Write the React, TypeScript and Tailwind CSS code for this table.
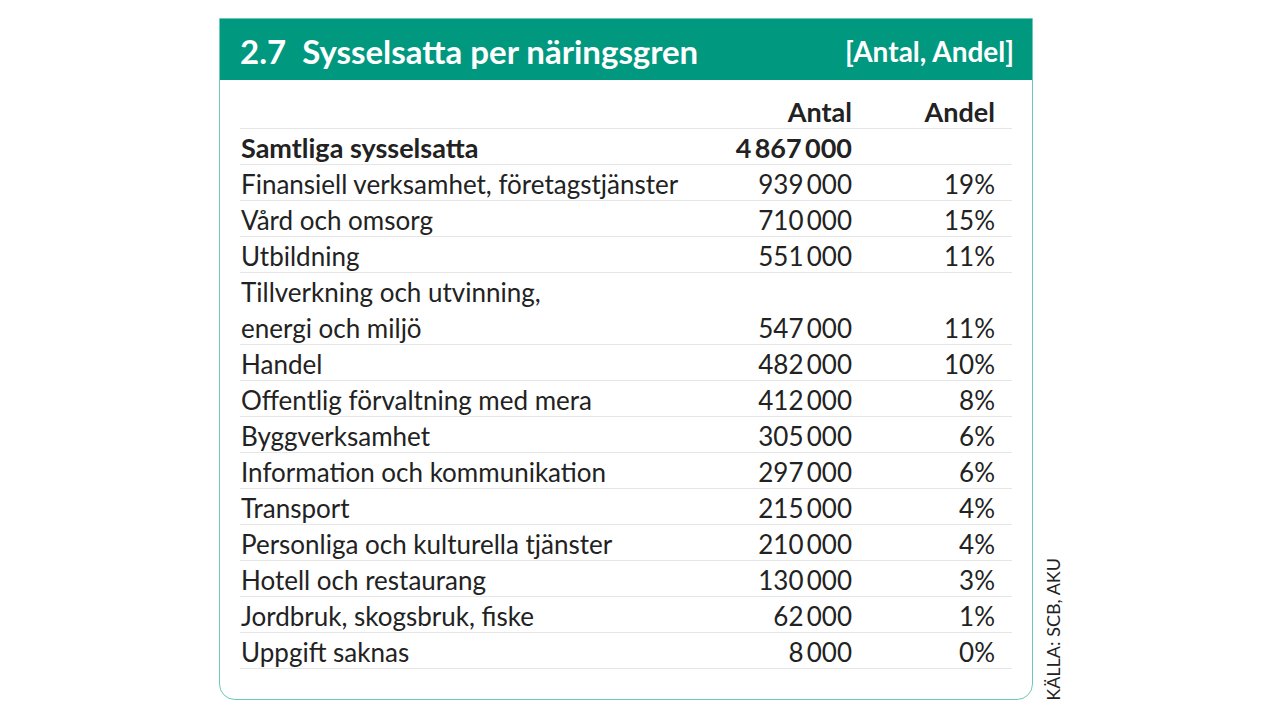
import React from "react";

const rows: { label: React.ReactNode; antal: string; andel: string; tall?: boolean; bold?: boolean }[] = [
  { label: "Samtliga sysselsatta", antal: "4 867 000", andel: "", bold: true },
  { label: "Finansiell verksamhet, företagstjänster", antal: "939 000", andel: "19%" },
  { label: "Vård och omsorg", antal: "710 000", andel: "15%" },
  { label: "Utbildning", antal: "551 000", andel: "11%" },
  {
    label: (
      <>
        Tillverkning och utvinning,
        <br />
        energi och miljö
      </>
    ),
    antal: "547 000",
    andel: "11%",
    tall: true,
  },
  { label: "Handel", antal: "482 000", andel: "10%" },
  { label: "Offentlig förvaltning med mera", antal: "412 000", andel: "8%" },
  { label: "Byggverksamhet", antal: "305 000", andel: "6%" },
  { label: "Information och kommunikation", antal: "297 000", andel: "6%" },
  { label: "Transport", antal: "215 000", andel: "4%" },
  { label: "Personliga och kulturella tjänster", antal: "210 000", andel: "4%" },
  { label: "Hotell och restaurang", antal: "130 000", andel: "3%" },
  { label: "Jordbruk, skogsbruk, fiske", antal: "62 000", andel: "1%" },
  { label: "Uppgift saknas", antal: "8 000", andel: "0%" },
];

function fmt(s: string) {
  return s.replace(/ /g, "\u2009");
}

export default function App() {
  return (
    <div
      className="w-[1280px] h-[720px] bg-white flex items-end pl-[219px] pt-[18px] pb-[20px] text-[#222]"
      style={{ fontFamily: "Lato, 'Noto Sans', sans-serif" }}
    >
      <div className="w-[814px] h-[682px] flex flex-col border border-[#6cc9b8] rounded-b-[16px] overflow-hidden">
        <div className="h-[62px] shrink-0 bg-[#00987f] flex items-center justify-between pl-[21px] pr-[19px] pt-[4px] text-white -mx-px -mt-px">
          <div className="text-[33px] font-bold leading-none">2.7&nbsp;&nbsp;Sysselsatta per näringsgren</div>
          <div className="text-[28px] font-bold leading-none">[Antal, Andel]</div>
        </div>
        <div className="pl-[20px] pr-[20px]">
          <div className="h-[49px] flex items-end border-b border-[#e6e6e6] text-[27px] font-bold leading-none pb-[3px]">
            <div className="flex-1" />
            <div className="w-[150px] text-right">Antal</div>
            <div className="w-[143px] text-right">Andel</div>
            <div className="w-[17px]" />
          </div>
          {rows.map((r, i) => (
            <div
              key={i}
              className={`flex items-end border-b border-[#e6e6e6] leading-[36px] ${r.tall ? "h-[72px]" : "h-[36px]"} ${r.bold ? "font-bold text-[27px]" : "text-[26px]"}`}
            >
              <div className="flex-1 pl-[1px] translate-y-[2px]">{r.label}</div>
              <div className="w-[150px] text-right translate-y-[2px]">{fmt(r.antal)}</div>
              <div className="w-[143px] text-right translate-y-[2px]">{r.andel}</div>
              <div className="w-[17px]" />
            </div>
          ))}
        </div>
      </div>
      <div className="ml-[9px] mb-[-1px] text-[18px] leading-[22px] text-[#222] [writing-mode:vertical-rl] rotate-180">
        KÄLLA: SCB, AKU
      </div>
    </div>
  );
}
